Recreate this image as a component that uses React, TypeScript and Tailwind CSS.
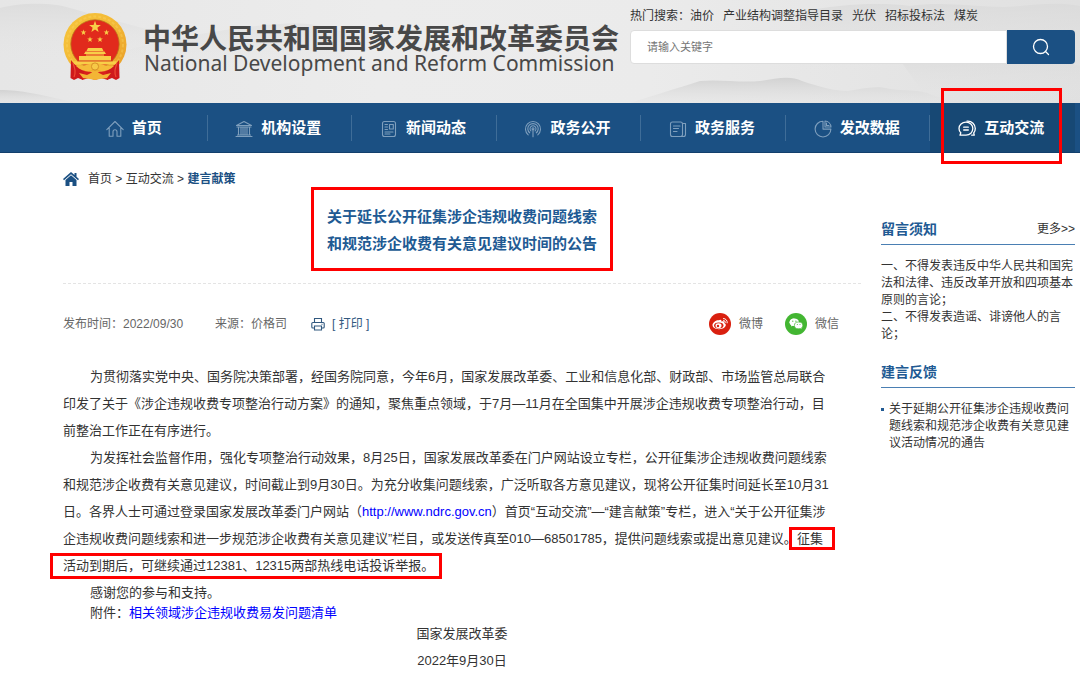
import type { ReactNode } from "react";

function Emblem() {
  const star = (cx: number, cy: number, r: number) =>
    Array.from({ length: 10 }, (_, i) => {
      const a = (Math.PI / 5) * i - Math.PI / 2;
      const d = i % 2 ? r * 0.4 : r;
      return `${(cx + d * Math.cos(a)).toFixed(2)},${(cy + d * Math.sin(a)).toFixed(2)}`;
    }).join(" ");
  return (
    <svg viewBox="0 0 64 68" className="h-[68px] w-16 shrink-0" role="img" aria-label="国徽">
      <defs>
        <linearGradient id="gold" x1="0" y1="0" x2="1" y2="1">
          <stop offset="0" stopColor="#f6c63c" />
          <stop offset="0.5" stopColor="#f3b836" />
          <stop offset="1" stopColor="#e89a25" />
        </linearGradient>
      </defs>
      <circle cx="32" cy="31.5" r="31.5" fill="url(#gold)" />
      <circle cx="32" cy="31.5" r="28" fill="none" stroke="#fbd968" strokeWidth="2" strokeDasharray="3 2" opacity="0.35" />
      <circle cx="32" cy="31" r="24.2" fill="#e12a1c" stroke="#b9761c" strokeWidth="0.8" />
      <g fill="#f8cf48">
        <polygon points={star(32, 14, 6.2)} />
        <polygon points={star(20.5, 19.5, 3)} />
        <polygon points={star(43.5, 19.5, 3)} />
        <polygon points={star(27, 26.5, 3)} />
        <polygon points={star(37, 26.5, 3)} />
        <path d="M25 35h14l1.500 3h-17z M22.500 38.600h19l1.500 2.400H21z M23 41.500h18v1H23z M16 43h32v5H16z M10 48.300h44l-1.500 3.200h-41z" />
      </g>
      <path d="M14 47.800h36" stroke="#d43a1a" strokeWidth="0.8" />
      <path d="M8 47c3 5 8 8 14 9l-2 11-5-2-4 2-3.500-2z" fill="#cf1a1c" />
      <path d="M56 47c-3 5-8 8-14 9l2 11 5-2 4 2 3.500-2z" fill="#cf1a1c" />
      <path d="M10 50c2 6 3 9 1 14M54 50c-2 6-3 9-1 14" stroke="#ee4c35" strokeWidth="1.200" fill="none" />
      <path d="M13 53c8 1 13-3 19-3s11 4 19 3c-4 4-8 5-11 5-4 0-5-2-8-2s-4 2-8 2c-3 0-7-1-11-5z" fill="#f5bd3a" />
      <path d="M21 58l7 1h8l7-1 2 9-7-2-6 2-6-2-7 2z" fill="#d8201c" />
      <path d="M16 60l8 2 4-2a5 5 0 0 1 8 0l4 2 8-2-4 5-7 1-5 1-5-1-7-1z" fill="#f3b535" />
      <circle cx="32" cy="53.500" r="3.600" fill="#f7c947" stroke="#c87c1c" strokeWidth="0.7" />
    </svg>
  );
}

function Mountains() {
  return (
    <svg className="absolute inset-0 h-full w-full" viewBox="0 0 1080 103" preserveAspectRatio="none" aria-hidden="true">
      <defs>
        <linearGradient id="sky" x1="0" x2="1" y1="0" y2="0">
          <stop offset="0" stopColor="#e6e6e6" />
          <stop offset="0.35" stopColor="#ececec" />
          <stop offset="0.6" stopColor="#ebebeb" />
          <stop offset="1" stopColor="#e0e0e0" />
        </linearGradient>
        <linearGradient id="ridge" x1="0" x2="0" y1="0" y2="1">
          <stop offset="0" stopColor="#d2d2d2" />
          <stop offset="1" stopColor="#e4e4e4" stopOpacity="0.3" />
        </linearGradient>
        <linearGradient id="haze" x1="0" x2="0" y1="0" y2="1">
          <stop offset="0" stopColor="#d9d9d9" stopOpacity="0.7" />
          <stop offset="1" stopColor="#e6e6e6" stopOpacity="0" />
        </linearGradient>
      </defs>
      <rect width="1080" height="103" fill="url(#sky)" />
      <path d="M0 8c20-5 50-6 70 0s50 14 80 22v30H0z" fill="url(#haze)" />
      <path d="M120 52c50-14 120-26 160-28 20-2 40 0 70 10v40H120z" fill="url(#haze)" opacity="0.6" />
      <path d="M0 90c20 0 40 4 75 13H0z" fill="url(#ridge)" />
      <path d="M800 12c40-8 80-10 110-6 40-6 80 4 110 0 20-2 40-4 60 0v70H800z" fill="url(#haze)" />
      <path d="M630 103c25-8 45-14 70-22 20-2 40 2 60 0 15-2 30-6 42 0 18 6 32 10 46 10 14-2 28-6 42-2 12 2 30 0 42 6l26 8z" fill="url(#ridge)" />
      <path d="M900 60c40-6 100-12 180 6v37H930z" fill="url(#haze)" />
    </svg>
  );
}

const iconProps = {
  viewBox: "0 0 18 18",
  fill: "none",
  stroke: "currentColor",
  strokeWidth: 1.1,
  strokeLinecap: "round" as const,
  strokeLinejoin: "round" as const,
  "aria-hidden": true,
};

const icons: Record<string, ReactNode> = {
  home: <path d="M.8 9.600 9 1.500l8.200 8.100M3.200 8v8.200H7v-4.400a2 2 0 0 1 4 0v4.400h3.800V8" />,
  bank: (
    <path d="M1.500 5.500 9 1.500l7.500 4zM1 16.500h16M2 7h14M3.500 7v8M6 7v8M8 7v8M10 7v8M12 7v8M14.500 7v8M2.500 15h13" />
  ),
  news: (
    <>
      <rect x="2.500" y="1.500" width="13" height="15" rx="2" />
      <path d="M5 4.500h2.500M5 7h2.500M5 9.500h2.500M5 12h8M5 14h5" />
      <rect x="9.500" y="4.500" width="3.800" height="4.500" />
    </>
  ),
  signal: (
    <>
      <path d="M4.200 14.800a7.500 7.500 0 1 1 9.600 0M5.700 12.800a5.200 5.200 0 1 1 6.600 0M6.900 10.900a3 3 0 1 1 4.200 0" />
      <circle cx="9" cy="8.800" r="1" />
      <path d="M9 9.800v7" />
    </>
  ),
  service: (
    <>
      <rect x="1.500" y="2" width="12" height="14.500" rx="2" />
      <path d="M4.500 6h6.500M4.500 8.500h5M4.500 11.500h3.500M13.500 3.500h3v11a2 2 0 0 1-2 2h-3" />
    </>
  ),
  pie: (
    <>
      <path d="M9 1.200a7.900 7.900 0 1 0 7.900 7.900H9z" />
      <path d="M11 1v6h6a6.500 6.500 0 0 0-6-6zM12.500 3v2.500H15" />
    </>
  ),
  chat: (
    <>
      <path d="M8 2.200c4 0 6.800 2.800 6.800 6.400S12 15.200 8 15.200H2l.8-2.400C1.600 11.700 1 10.200 1 8.600 1 5 4 2.200 8 2.200z" strokeWidth="1.300" />
      <path d="M5.700 7.200h4.600M5.700 10h4.600M9 1.200c5-.4 8.300 3.400 8.300 7.400 0 1.900-.6 3.200-1.600 4.400l.6 2.200h-2.600" strokeWidth="1.300" />
    </>
  ),
};

const navItems = [
  { label: "首页", icon: "home" },
  { label: "机构设置", icon: "bank" },
  { label: "新闻动态", icon: "news" },
  { label: "政务公开", icon: "signal" },
  { label: "政务服务", icon: "service" },
  { label: "发改数据", icon: "pie" },
  { label: "互动交流", icon: "chat", active: true },
];

const hotWords = ["油价", "产业结构调整指导目录", "光伏", "招标投标法", "煤炭"];

function Header() {
  return (
    <header className="relative">
      <Mountains />
      <div className="relative flex h-[103px] items-start justify-between pr-[5px] pl-[63px]">
        <a href="#" className="flex gap-4 pt-[13px]">
          <Emblem />
          <span className="flex flex-col pt-[13px] whitespace-nowrap text-[#484848]">
            <span className="text-[28px] leading-7 font-bold">中华人民共和国国家发展和改革委员会</span>
            <span className="pl-px font-['Noto_Sans'] text-[21px] leading-[18px]">National Development and Reform Commission</span>
          </span>
        </a>
        <div className="w-[445px] shrink-0">
          <p className="flex h-[30px] items-center gap-[9px] pt-0.5 text-xs">
            <span className="-mr-[9px]">热门搜索：</span>
            {hotWords.map((w) => (
              <a key={w} href="#">{w}</a>
            ))}
          </p>
          <form className="flex h-[34px]" onSubmit={(e) => e.preventDefault()}>
            <input
              type="text"
              aria-label="搜索"
              placeholder="请输入关键字"
              className="min-w-0 flex-1 rounded-l border border-[#dddddd] bg-white px-4 text-[11px] outline-none placeholder:text-[#757575]"
            />
            <button type="submit" aria-label="搜索" className="flex w-[68px] items-center justify-center rounded-r bg-[#1b5083] text-white">
              <svg viewBox="0 0 18 18" className="size-[18px]" fill="none" stroke="currentColor" strokeWidth="1.300" strokeLinecap="round">
                <circle cx="8.500" cy="8.500" r="7" />
                <path d="m13.500 13.500 3 3" />
              </svg>
            </button>
          </form>
        </div>
      </div>
    </header>
  );
}

function Nav() {
  return (
    <nav className="relative border-b border-[#123f6c] bg-[#1b5083] pr-[5px] pl-[63px]">
      <ul className="grid grid-cols-7">
        {navItems.map((n) => (
          <li key={n.label} className={n.active ? "relative bg-[#174874]" : "relative"}>
            <a href="#" className="flex h-[49px] items-center justify-center gap-2 pr-[3px] pt-0.5 text-[15px] font-bold text-white">
              <svg {...iconProps} className={n.active ? "size-[18px] text-white" : "size-[18px] text-[#7f9fbd]"}>
                {icons[n.icon]}
              </svg>
              {n.label}
            </a>
            {!n.active && <span className="absolute top-3 right-0 h-[26px] w-px bg-[#3f6d98]" />}
            {n.active && <span className="pointer-events-none absolute -top-[15px] right-[13px] -bottom-[12px] left-[11px] border-[3px] border-[#ff0000]" />}
          </li>
        ))}
      </ul>
    </nav>
  );
}

function Share() {
  return (
    <div className="ml-auto flex items-center gap-[22px] pr-[22px] text-[#666666]">
      <a href="#" className="flex items-center gap-2">
        <svg viewBox="0 0 22 22" className="size-[22px]" aria-hidden="true">
          <circle cx="11" cy="11" r="11" fill="#d9200f" />
          <path d="M9.800 7.300c1-.7 2.200-.8 2.500 0 .2.400.1.800 0 1.200 1.400-.6 2.900-.5 2.900.7 0 .4-.1.600-.2.900 1 .3 1.800 1 1.800 2 0 2.200-3 4.200-6.800 4.200-3.700 0-6.500-1.700-6.500-4.200 0-2.200 3.200-5.300 6.300-4.800z" fill="#fff" />
          <ellipse cx="9.800" cy="12.500" rx="4.700" ry="3" fill="#d9200f" />
          <ellipse cx="9.500" cy="12.700" rx="3" ry="2.400" fill="#fff" />
          <circle cx="9" cy="13" r="1.200" fill="#d9200f" />
          <path d="M14.500 5.500a3.600 3.600 0 0 1 3.700 4.400M14.600 7.500a1.700 1.700 0 0 1 1.700 2" stroke="#fff" strokeWidth="1" fill="none" strokeLinecap="round" />
        </svg>
        微博
      </a>
      <a href="#" className="flex items-center gap-2">
        <svg viewBox="0 0 22 22" className="size-[22px]" aria-hidden="true">
          <circle cx="11" cy="11" r="11" fill="#43b632" />
          <path d="M9.300 5.500c-2.700 0-4.700 1.700-4.700 3.800 0 1.200.6 2.200 1.700 2.900l-.4 1.400 1.600-.8c.6.200 1.200.3 1.800.3z" fill="#fff" />
          <ellipse cx="9.300" cy="9.300" rx="4.700" ry="3.800" fill="#fff" />
          <path d="m15.500 14.800 1 1.400-.2-2.400z" fill="#fff" />
          <ellipse cx="13.600" cy="12.400" rx="4.200" ry="3.400" fill="#fff" stroke="#43b632" strokeWidth="0.7" />
          <g fill="#43b632">
            <circle cx="7.800" cy="8.200" r=".6" />
            <circle cx="10.900" cy="8.200" r=".6" />
            <circle cx="12.300" cy="11.500" r=".5" />
            <circle cx="15" cy="11.500" r=".5" />
          </g>
        </svg>
        微信
      </a>
    </div>
  );
}

function Article() {
  return (
    <main className="min-w-0">
      <div className="flex items-center gap-[9px] pt-[18px] text-xs leading-4">
        <svg viewBox="0 0 16 14" className="h-[14px] w-4" fill="#1b5083" aria-hidden="true">
          <path d="M8 0 0 7l1 1.200L8 2.200l7 6L16 7l-2.500-2.200V1h-2v2z" />
          <path d="M8 3.200 2.500 8V14h4v-4h3v4h4V8z" />
        </svg>
        <p>
          <a href="#">首页</a> &gt; <a href="#">互动交流</a> &gt; <a href="#" className="font-bold text-[#1b5083]">建言献策</a>
        </p>
      </div>
      <div className="flex justify-center border-b border-dashed border-[#e4e4e4] pb-3">
        <h1 className="border-[3px] border-[#ff0000] px-[13px] pt-[13px] pb-[11px] text-[15px] leading-[27px] font-bold text-[#215a93]">
          关于延长公开征集涉企违规收费问题线索
          <br />
          和规范涉企收费有关意见建议时间的公告
        </h1>
      </div>
      <div className="flex h-[79px] items-center text-xs text-[#666666]">
        <span>发布时间：2022/09/30</span>
        <span className="ml-8">来源：价格司</span>
        <button type="button" className="ml-6 flex items-center gap-[7px] text-[#31587f]">
          <svg viewBox="0 0 14 14" className="size-[14px]" fill="none" stroke="currentColor" strokeWidth="1.100" aria-hidden="true">
            <path d="M3.500 5.500v-4h7v4M3.500 11H1.800a1 1 0 0 1-1-1V6.500a1 1 0 0 1 1-1h10.400a1 1 0 0 1 1 1V10a1 1 0 0 1-1 1h-1.700M3.500 9h7v4h-7zM10.500 7.300h1" />
          </svg>
          [ 打印 ]
        </button>
        <Share />
      </div>
      <div className="text-[13px] leading-[27px] whitespace-nowrap">
        <p className="indent-[27px]">
          为贯彻落实党中央、国务院决策部署，经国务院同意，今年6月，国家发展改革委、工业和信息化部、财政部、市场监管总局联合
          <br />
          印发了关于《涉企违规收费专项整治行动方案》的通知，聚焦重点领域，于7月—11月在全国集中开展涉企违规收费专项整治行动，目
          <br />
          前整治工作正在有序进行。
        </p>
        <p className="indent-[27px]">
          为发挥社会监督作用，强化专项整治行动效果，8月25日，国家发展改革委在门户网站设立专栏，公开征集涉企违规收费问题线索
          <br />
          和规范涉企收费有关意见建议，时间截止到9月30日。为充分收集问题线索，广泛听取各方意见建议，现将公开征集时间延长至10月31
          <br />
          日。各界人士可通过登录国家发展改革委门户网站（<a href="#" className="text-[#0000ff]">http://www.ndrc.gov.cn</a>）首页“互动交流”—“建言献策”专栏，进入“关于公开征集涉
          <br />
          企违规收费问题线索和进一步规范涉企收费有关意见建议”栏目，或发送传真至010—68501785，提供问题线索或提出意见建议。
          <span className="relative">
            征集
            <span className="pointer-events-none absolute -inset-y-[4px] -right-3 -left-2 border-[3px] border-[#ff0000]" />
          </span>
          <br />
          <span className="relative">
            活动到期后，可继续通过12381、12315两部热线电话投诉举报。
            <span className="pointer-events-none absolute -top-[5px] -right-2 -bottom-[6px] -left-[13px] border-[3px] border-[#ff0000]" />
          </span>
        </p>
        <p className="indent-[27px]">感谢您的参与和支持。</p>
        <p className="indent-[27px] leading-[14px]">
          附件：<a href="#" className="text-[#0000ff]">相关领域涉企违规收费易发问题清单</a>
        </p>
        <p className="text-center">国家发展改革委</p>
        <p className="text-center">2022年9月30日</p>
      </div>
    </main>
  );
}

function Sidebar() {
  return (
    <aside className="pt-[61px] text-xs leading-[17px]">
      <section>
        <div className="flex h-[31px] items-center justify-between border-b border-[#4a7fb3]">
          <h2 className="text-[14px] font-bold text-[#215a93]">留言须知</h2>
          <a href="#">更多&gt;&gt;</a>
        </div>
        <div className="mt-[13px]">
          <p>一、不得发表违反中华人民共和国宪法和法律、违反改革开放和四项基本原则的言论；</p>
          <p>二、不得发表造谣、诽谤他人的言论；</p>
        </div>
      </section>
      <section className="mt-[14px]">
        <h2 className="flex h-[31px] items-center border-b border-[#4a7fb3] text-[14px] font-bold text-[#215a93]">建言反馈</h2>
        <ul className="mt-[13px]">
          <li className="flex gap-[5px]">
            <span className="mt-[7px] size-[3px] shrink-0 bg-[#215a93]" />
            <a href="#">关于延期公开征集涉企违规收费问题线索和规范涉企收费有关意见建议活动情况的通告</a>
          </li>
        </ul>
      </section>
    </aside>
  );
}

export default function App() {
  return (
    <div lang="zh-CN" className="min-h-screen overflow-x-hidden bg-white font-['Liberation_Sans','Noto_Sans_CJK_SC',sans-serif] text-[#333333]">
      <Header />
      <Nav />
      <div className="grid grid-cols-[minmax(0,1fr)_194px] gap-5 pr-[5px] pl-[63px]">
        <Article />
        <Sidebar />
      </div>
    </div>
  );
}
